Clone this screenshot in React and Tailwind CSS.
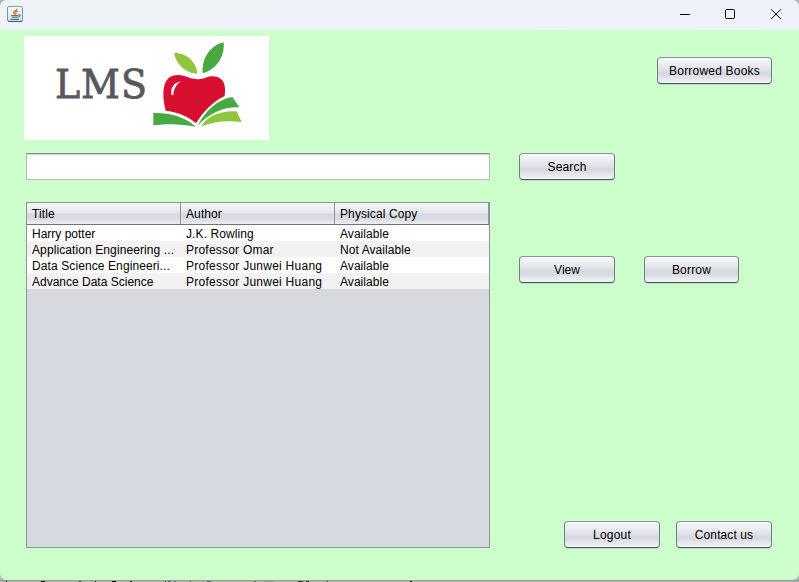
import React from "react";

const books = [
  ["Harry potter", "J.K. Rowling", "Available"],
  ["Application Engineering ...", "Professor Omar", "Not Available"],
  ["Data Science Engineeri...", "Professor Junwei Huang", "Available"],
  ["Advance Data Science", "Professor Junwei Huang", "Available"],
];

const tracking = [
  ["tracking-normal", "tracking-[0.1px]", "tracking-[0.05px]"],
  ["tracking-[0.1px]", "tracking-[0.22px]", "tracking-[0.08px]"],
  ["tracking-[0.1px]", "tracking-[0.25px]", "tracking-[0.05px]"],
  ["tracking-normal", "tracking-[0.25px]", "tracking-[0.05px]"],
];

function Button({ children, className }) {
  return (
    <button
      className={`h-[27px] rounded-[4px] border border-t-[#8f939c] border-x-[#777a84] border-b-[#50545c] bg-[linear-gradient(#f7f8fa_0%,#e6e7ec_38%,#d6d9df_58%,#d8dae1_68%,#f5f7fc_100%)] pt-px text-center text-[12px] leading-[25px] whitespace-nowrap shadow-[0_1px_0_#b3dfb8] ${className}`}
    >
      {children}
    </button>
  );
}

function JavaIcon() {
  return (
    <svg width="16" height="16" viewBox="0 0 16 16" fill="none">
      <defs>
        <linearGradient id="tile" x1="0" y1="0" x2="0" y2="1">
          <stop offset="0" stopColor="#fff" />
          <stop offset="1" stopColor="#d5dde4" />
        </linearGradient>
      </defs>
      <rect x=".5" y=".5" width="15" height="15" rx="1.5" fill="url(#tile)" stroke="#7c97aa" />
      <path d="M1 15.4h14" stroke="#385e7a" />
      <path d="M9.8 2.8C10 4.8 6 5.2 6.6 7.1c.2.7 1 1 1 1.7M10.8 5C8.4 5.8 8 6.6 8.8 7.5c.3.5 0 1-.3 1.3" stroke="#e77a22" strokeWidth="1.4" />
      <path d="M4 9.6h7.5M5 11.3h5.8M11.5 8.8c2.4-.7 2 1.9-.2 2.4M3.5 13.4h8.5" stroke="#537c9c" strokeWidth="1.1" />
    </svg>
  );
}

function Apple() {
  return (
    <svg width="105" height="100" viewBox="0 0 315 300" className="shrink-0">
      <path d="M87 51C122 49 154 76 157 113C127 112 95 91 87 51Z" fill="#8fc63e" />
      <path d="M236 19C240 64 212 102 173 112C169 70 194 28 236 19Z" fill="#48a942" />
      <path
        d="M62 224C53 191 50 145 70 127C91 110 116 118 137 127C152 131 168 130 181 125C205 115 235 123 239 149C241 161 240 170 239 180C203 197 174 228 153 262C129 239 95 228 62 224Z"
        fill="#d90f31"
      />
      <path d="M108 136C88 140 76 154 79 176L85 178C85 160 94 145 108 136Z" fill="#fff" />
      <path d="M25 231C70 229 118 241 153 272C112 264 72 262 25 268Z" fill="#48a942" />
      <path d="M158 269C181 225 216 190 262 183L283 214C237 211 190 233 158 269Z" fill="#48a942" />
      <path d="M168 271C188 238 229 223 275 226L290 258C246 252 206 257 168 271Z" fill="#8fc63e" />
    </svg>
  );
}

function Logo() {
  return (
    <div className="flex h-[104px] w-[245px] bg-white">
      <svg width="121" height="104" viewBox="0 0 121 104" className="shrink-0 overflow-visible">
        <g transform="scale(.96 1)">
          <text
            x="32.4 59.5 101"
            y="62.5"
            fontFamily="'DejaVu Serif', serif"
            fontSize="39.5"
            fill="#58585c"
            stroke="#58585c"
            strokeWidth=".8"
          >
            LMS
          </text>
        </g>
      </svg>
      <Apple />
    </div>
  );
}

function TitleBar() {
  return (
    <header className="flex h-[30px] items-start justify-between bg-gradient-to-r from-[#eef3f7] to-[#eff2fa]">
      <div className="pt-[6px] pl-[7px]">
        <JavaIcon />
      </div>
      <svg width="120" height="30" viewBox="0 0 120 30" fill="none" stroke="#000">
        <path d="M1 14.5h10" />
        <rect x="46.5" y="9.5" width="9" height="9" rx="1" />
        <path d="M92 9.2l10 10M102 9.2l-10 10" />
      </svg>
    </header>
  );
}

function BookTable() {
  return (
    <div className="mt-[22px] ml-[2px] h-[346px] w-[464px] border border-[#8f949c] bg-[#d6d9e0]">
      <div className="grid h-[22px] grid-cols-3 border-b border-[#6f737c] bg-[linear-gradient(#f5f6f8_0%,#e5e7eb_45%,#d5d8df_55%,#d9dce2_75%,#eceef3_100%)] leading-[23px]">
        {["Title", "Author", "Physical Copy"].map((name) => (
          <div key={name} className="h-[21px] border-r border-[#8f949c] pl-[5px] tracking-[0.1px]">
            {name}
          </div>
        ))}
      </div>
      {books.map((row, i) => (
        <div key={i} className="grid h-[16px] grid-cols-3 leading-[19px] whitespace-nowrap even:bg-white odd:bg-[#f2f2f2]">
          {row.map((cell, j) => (
            <div key={j} className={`h-[16px] pl-[5px] ${tracking[i][j]}`}>
              {cell}
            </div>
          ))}
        </div>
      ))}
    </div>
  );
}

const marks = [
  [6, 1, "#000"], [41, 4, "#000"], [79, 2, "#246"], [95, 1, "#000"], [112, 4, "#000"],
  [130, 2, "#000"], [165, 1, "#222"], [168, 3, "#468"], [174, 2, "#777"], [190, 1, "#555"],
  [207, 4, "#556"], [254, 2, "#853"], [264, 10, "#999"], [298, 5, "#333"], [306, 3, "#222"],
  [327, 1, "#333"], [410, 2, "#111"],
];

export default function App() {
  return (
    <div className="h-[582px] w-[799px] overflow-hidden bg-[#b5b5b5] font-['Liberation_Sans',Arial,sans-serif] text-[12px] text-black">
      <div className="h-[580px] overflow-hidden rounded-[7px] bg-[#ccffcc]">
        <TitleBar />
        <main className="flex h-[550px] pt-[6px] pl-[24px]">
          <section className="w-[466px] shrink-0">
            <Logo />
            <input
              aria-label="Search books"
              className="mt-[13px] ml-[2px] block h-[27px] w-[464px] border border-[#b5b8bd] border-t-[#85888d] bg-white px-[5px] shadow-[inset_0_1px_0_#d8d9dc,inset_0_2px_0_#f4f4f5] outline-none"
            />
            <BookTable />
          </section>
          <section className="ml-[29px] flex w-[253px] shrink-0 flex-col pt-[21px]">
            <Button className="w-[115px] self-end tracking-[0.2px]">Borrowed Books</Button>
            <Button className="mt-[69px] w-[96px] tracking-[0.15px]">Search</Button>
            <div className="mt-[76px] flex gap-[29px]">
              <Button className="w-[96px]">View</Button>
              <Button className="w-[95px] tracking-[0.2px]">Borrow</Button>
            </div>
            <div className="mt-[238px] flex justify-end gap-[16px]">
              <Button className="w-[96px] tracking-[0.2px]">Logout</Button>
              <Button className="w-[96px] tracking-[0.1px]">Contact us</Button>
            </div>
          </section>
        </main>
      </div>
      <svg width="799" height="2" viewBox="0 0 799 2" className="block">
        <path d="M0 .5h799" stroke="#989c98" />
        {marks.map(([x, w, c]) => (
          <rect key={x} x={x} y="1" width={w} height="1" fill={c} />
        ))}
      </svg>
    </div>
  );
}
